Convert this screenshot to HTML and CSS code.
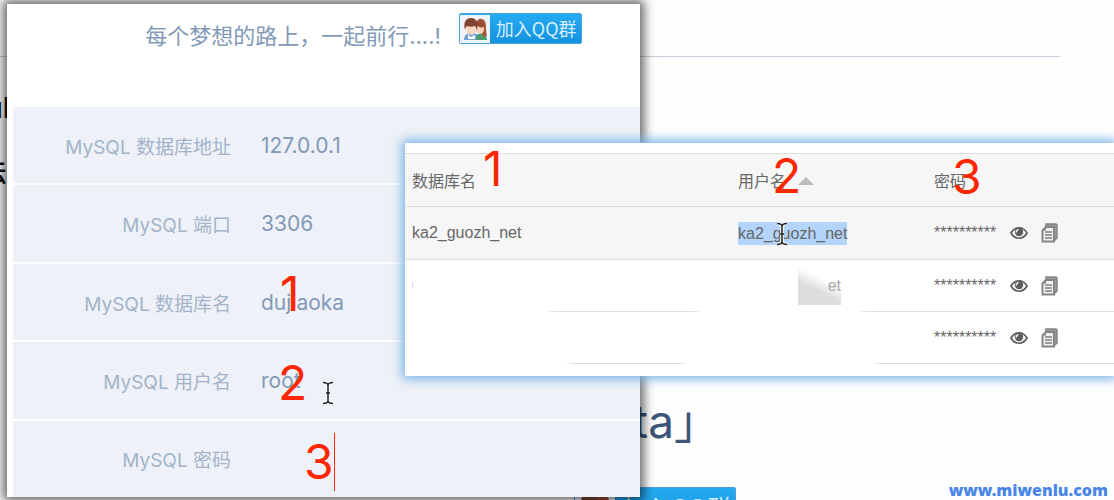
FILE: index.html
```
<!DOCTYPE html>
<html lang="zh-CN">
<head>
    <meta charset="UTF-8">
    <title>MySQL 数据库配置</title>
    <link rel="stylesheet" href="styles.css">
</head>
<body>
    <!-- shared icons -->
    <svg class="sprite" width="0" height="0" aria-hidden="true">
        <symbol id="people" viewBox="0 0 30 28">
            <rect width="30" height="28" fill="#eef3fb"/>
            <path d="M4 25c0-5 3-7 8-7s7 2 7 7z" fill="#6fa3d6"/>
            <path d="M16 25c0-5 2-7 5-7s6 3 6 7z" fill="#4c9a72"/>
            <path d="M16 9c1-7 9-7 10 1 0 4 0 8 1 11-3 2-5 0-5-3l-6-2z" fill="#a5573a"/>
            <ellipse cx="20" cy="14" rx="4" ry="5" fill="#f8d3ba"/>
            <path d="M15 12c0-7 8-8 9 0-3 1-6 0-7-2z" fill="#98492f"/>
            <ellipse cx="11" cy="14" rx="5" ry="6" fill="#f9d8c2"/>
            <path d="M5 15C3 7 6 3 11 3s8 4 6 12c-1-2-1-3-2-4-3 1-6 1-8 0-1 1-2 2-2 4z" fill="#804531"/>
            <path d="M8 20l3 2 4-2v4H8z" fill="#fff"/>
        </symbol>
        <symbol id="eye" viewBox="0 0 18 14">
            <path d="M1 7c4-7 12-7 16 0-4 7-12 7-16 0z" fill="#fafafa" stroke="#5c5c5c" stroke-width="1.700"/>
            <circle cx="9" cy="6" r="4.200" fill="#5c5c5c"/>
            <path d="M6.500 6.500a2.500 2.500 0 0 1 2-3" fill="none" stroke="#eee" stroke-width="1.500"/>
        </symbol>
        <symbol id="copy" viewBox="0 0 17 20">
            <path d="M5 1h10l1 1v13l-2 2H5z" fill="#999" stroke="#858585" stroke-width="1.500"/>
            <path d="M5 4h8v14.500H1.500V7.500z" fill="#f2f2f2" stroke="#858585" stroke-width="2"/>
            <path d="M1 7.500L5 3.500v4z" fill="#858585"/>
            <path d="M4 9h7M4 12h7M4 15h7" stroke="#808080" stroke-width="1.500"/>
        </symbol>
        <symbol id="ibeam" viewBox="0 0 12 24">
            <path d="M1 1.500c3 0 5 1 5 3 0-2 2-3 5-3M6 4v16M1 22.500c3 0 5-1 5-3 0 2 2 3 5 3M4 12h4" fill="none" stroke="#fff" stroke-width="3.500"/>
            <path d="M1 1.500c3 0 5 1 5 3 0-2 2-3 5-3M6 4v16M1 22.500c3 0 5-1 5-3 0 2 2 3 5 3M4 12h4" fill="none" stroke="#222" stroke-width="1.500"/>
        </symbol>
    </svg>

    <div class="page">
        <div class="back">
            <hr class="back-line">
            <span class="back-edge edge-top">ul</span>
            <span class="back-edge edge-bottom">法</span>
            <span class="back-title">ta｣</span>
            <a class="qq qq-large" href="#"><svg class="qq-icon"><use href="#people"/></svg><span>加入QQ群</span></a>
        </div>

        <div class="window install">
            <div class="install-head">
                <span class="slogan">每个梦想的路上，一起前行....!</span>
                <a class="qq" href="#"><svg class="qq-icon"><use href="#people"/></svg><span>加入QQ群</span></a>
            </div>
            <form class="install-form">
                <div class="field">
                    <label for="host">MySQL 数据库地址</label>
                    <input type="text" id="host" value="127.0.0.1">
                </div>
                <div class="field">
                    <label for="port">MySQL 端口</label>
                    <input type="text" id="port" value="3306">
                </div>
                <div class="field">
                    <label for="dbname">MySQL 数据库名</label>
                    <input type="text" id="dbname" value="dujiaoka">
                </div>
                <div class="field">
                    <label for="dbuser">MySQL 用户名</label>
                    <input type="text" id="dbuser" value="root">
                </div>
                <div class="field">
                    <label for="dbpass">MySQL 密码</label>
                    <input type="password" id="dbpass">
                </div>
            </form>
            <span class="mark mark-a1">1</span>
            <span class="mark mark-a2">2</span>
            <span class="mark mark-a3">3</span>
            <svg class="ibeam ibeam-a"><use href="#ibeam"/></svg>
        </div>

        <div class="window panel">
            <table>
                <thead>
                    <tr>
                        <th class="col-name">数据库名</th>
                        <th class="col-user">用户名<span class="sort"></span></th>
                        <th>密码</th>
                    </tr>
                </thead>
                <tbody>
                    <tr class="hovered">
                        <td>ka2_guozh_net</td>
                        <td><span class="selected">ka2_guozh_net</span></td>
                        <td>
                            <div class="secret">
                                <span class="stars">**********</span>
                                <button type="button" aria-label="查看"><svg class="eye"><use href="#eye"/></svg></button>
                                <button type="button" aria-label="复制"><svg class="copy"><use href="#copy"/></svg></button>
                            </div>
                        </td>
                    </tr>
                    <tr class="erased-a">
                        <td><span class="trace"></span></td>
                        <td><div class="smudge">et</div></td>
                        <td>
                            <div class="secret">
                                <span class="stars">**********</span>
                                <button type="button" aria-label="查看"><svg class="eye"><use href="#eye"/></svg></button>
                                <button type="button" aria-label="复制"><svg class="copy"><use href="#copy"/></svg></button>
                            </div>
                        </td>
                    </tr>
                    <tr class="erased-b">
                        <td></td>
                        <td></td>
                        <td>
                            <div class="secret">
                                <span class="stars">**********</span>
                                <button type="button" aria-label="查看"><svg class="eye"><use href="#eye"/></svg></button>
                                <button type="button" aria-label="复制"><svg class="copy"><use href="#copy"/></svg></button>
                            </div>
                        </td>
                    </tr>
                </tbody>
            </table>
            <span class="mark mark-b1">1</span>
            <span class="mark mark-b2">2</span>
            <span class="mark mark-b3">3</span>
            <svg class="ibeam ibeam-b"><use href="#ibeam"/></svg>
        </div>

        <span class="watermark">www.miwenlu.com</span>
    </div>
</body>
</html>
```
FILE: styles.css
```
* {
    box-sizing: border-box;
}

body {
    margin: 0;
    background-color: #fefefe;
    font-family: Inter, "Noto Sans CJK SC", sans-serif;
}

.sprite {
    position: absolute;
}

.page {
    position: relative;
    height: 100vh;
    overflow: hidden;
}

/* page behind the two windows */
.back-line {
    margin: 56px 54px 0 0;
    border: 0;
    border-top: 1px solid #c3ceda;
}

.back-edge {
    position: absolute;
    color: #111;
    font-size: 28px;
    font-weight: 500;
    line-height: 32px;
}

.edge-top {
    top: 92px;
    left: -14px;
}

.edge-bottom {
    top: 156px;
    left: -21px;
}

.back-title {
    position: absolute;
    top: 393px;
    left: 633px;
    color: #3d5578;
    font-size: 46px;
    line-height: 56px;
}

/* QQ group badge */
.qq {
    display: flex;
    align-items: center;
    width: 123px;
    height: 31px;
    border: 1px solid #4ba0dc;
    border-radius: 2px;
    background: linear-gradient(#25aaf0, #1592de);
    color: #d5eeff;
    font-family: "Noto Sans CJK SC", sans-serif;
    font-size: 18px;
    line-height: 26px;
    text-decoration: none;
    white-space: nowrap;
}

.qq span {
    padding-bottom: 2px;
}

.qq-icon {
    flex: none;
    width: 30px;
    height: 28px;
    margin-right: 6px;
}

.qq-large {
    position: absolute;
    top: 487px;
    left: 574px;
    width: 162px;
    height: 41px;
    font-size: 24px;
}

.qq-large .qq-icon {
    width: 40px;
    height: 38px;
    margin-right: 8px;
}

.window {
    position: absolute;
    background-color: #fff;
}

/* install form */
.install {
    display: flex;
    flex-direction: column;
    top: 4px;
    right: 474px;
    bottom: 3px;
    left: 7px;
    box-shadow: 0 0 10px 4px rgba(0, 0, 0, 0.6);
}

.install-head {
    display: flex;
    justify-content: center;
    align-items: flex-start;
    gap: 18px;
    height: 103px;
    padding: 9px 0 0 80px;
}

.slogan {
    color: #8299b8;
    font-size: 22px;
    line-height: 46px;
    white-space: nowrap;
}

.install-form {
    display: flex;
    flex: 1;
    flex-direction: column;
    gap: 2px;
    margin-left: 6px;
}

.field {
    display: flex;
    flex: 1;
    align-items: center;
    gap: 30px;
    background-color: #eef1f7;
}

.field:first-child {
    border-top-left-radius: 4px;
}

.field label {
    width: 218px;
    color: #a3b4ca;
    font-size: 19px;
    text-align: right;
}

.field input {
    flex: 1;
    min-width: 0;
    padding: 0;
    border: 0;
    outline: none;
    background: none;
    color: #8299b8;
    font-family: inherit;
    font-size: 21px;
}

/* database list */
.panel {
    top: 143px;
    right: 0;
    left: 405px;
    padding: 10px 0 12px;
    box-shadow: 0 0 10px 3px #7ab3ea;
    font-family: "Liberation Sans", "Noto Sans CJK SC", sans-serif;
}

table {
    width: 100%;
    border-collapse: collapse;
    table-layout: fixed;
    color: #666;
    font-size: 16px;
}

.col-name {
    width: 326px;
}

.col-user {
    width: 196px;
}

th,
td {
    height: 52px;
    padding: 0 0 0 7px;
    font-weight: normal;
    text-align: left;
}

th,
.hovered td {
    height: 53px;
}

thead tr,
.hovered {
    border-top: 1px solid #ddd;
    border-bottom: 1px solid #ddd;
    background-color: #f6f6f6;
}

.sort {
    display: inline-block;
    margin-left: 12px;
    border-right: 8px solid transparent;
    border-bottom: 8px solid #bbb;
    border-left: 8px solid transparent;
    vertical-align: 2px;
}

.selected {
    display: inline-block;
    background-color: #b3d5fb;
    line-height: 23px;
}

/* rows wiped out by hand, only parts of the rules are left */
.erased-a {
    background: linear-gradient(90deg, transparent 141px, #ddd 151px 288px, transparent 298px 453px, #ddd 463px) bottom / 100% 1px no-repeat;
}

.erased-b {
    background: linear-gradient(90deg, transparent 160px, #ddd 170px 273px, transparent 283px 467px, #ddd 477px) bottom / 100% 1px no-repeat;
}

.trace {
    display: block;
    width: 1px;
    height: 7px;
    background-color: #ddd;
}

.smudge {
    width: 43px;
    height: 38px;
    margin-left: 60px;
    background: linear-gradient(205deg, #fff 34%, #ddd 60%);
    color: #aaa;
    line-height: 38px;
    text-align: right;
}

.secret {
    display: flex;
    align-items: center;
}

.stars {
    margin-right: 14px;
}

.secret button {
    display: flex;
    margin-right: 13px;
    padding: 0;
    border: 0;
    background: none;
    cursor: pointer;
}

.eye {
    width: 18px;
    height: 14px;
}

.copy {
    width: 17px;
    height: 20px;
}

/* red numbers and cursors on top */
.mark {
    position: absolute;
    color: #ff2600;
    font-family: Inter, sans-serif;
    font-size: 48px;
    line-height: 58px;
}

.mark-a1 {
    top: 261px;
    left: 273px;
}

.mark-a2 {
    top: 350px;
    left: 271px;
}

.mark-a3 {
    top: 429px;
    left: 297px;
    border-right: 1px solid #ff2600;
}

.mark-b1 {
    top: -3px;
    left: 78px;
}

.mark-b2 {
    top: 4px;
    left: 367px;
}

.mark-b3 {
    top: 5px;
    left: 547px;
}

.ibeam {
    position: absolute;
    width: 12px;
    height: 24px;
}

.ibeam-a {
    top: 377px;
    left: 315px;
}

.ibeam-b {
    top: 79px;
    left: 371px;
}

.watermark {
    position: absolute;
    right: 6px;
    bottom: 0;
    color: #4a86e8;
    font-family: "Noto Sans", sans-serif;
    font-size: 16px;
    font-weight: 900;
    line-height: 20px;
}
```
